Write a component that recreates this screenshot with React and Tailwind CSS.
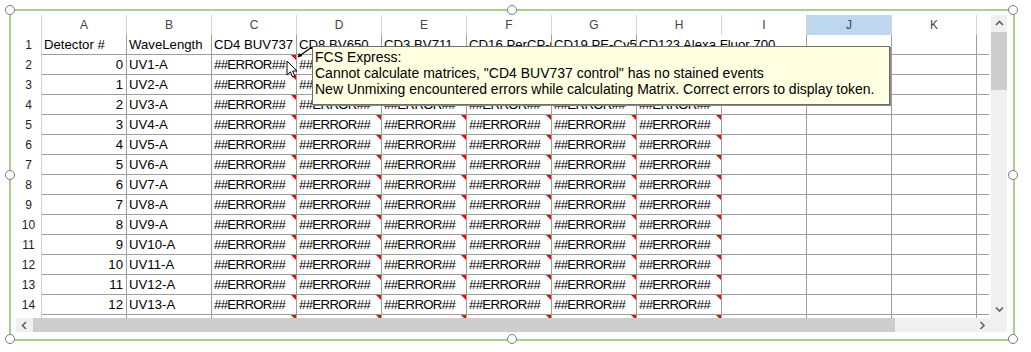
import React from 'react';

const COLS = ['A','B','C','D','E','F','G','H','I','J','K','L'];
const ROW1 = ['Detector #','WaveLength','CD4 BUV737','CD8 BV650','CD3 BV711','CD16 PerCP-Cy5.5','CD19 PE-Cy5','CD123 Alexa Fluor 700','','','',''];

function Tri() {
  return <span className="absolute top-0 right-0 w-[5px] h-[5px] bg-[#ff0000] [clip-path:polygon(0_0,100%_0,100%_100%)]" />;
}

function Handle({ x, y }) {
  return (
    <div
      className="absolute w-[10px] h-[10px] rounded-full border-[1.5px] border-[#7a7a7a] bg-white"
      style={{ left: x - 5, top: y - 5 }}
    />
  );
}

function Chevron({ dir }) {
  const d = {
    up: 'M1 5 L4.5 1.5 L8 5',
    down: 'M1 1.5 L4.5 5 L8 1.5',
  }[dir];
  if (dir === 'left' || dir === 'right') {
    const p = dir === 'left' ? 'M5 1 L1.5 4.5 L5 8' : 'M1.5 1 L5 4.5 L1.5 8';
    return (
      <svg width="7" height="9" viewBox="0 0 7 9">
        <path d={p} fill="none" stroke="#606060" strokeWidth="1.6" />
      </svg>
    );
  }
  return (
    <svg width="9" height="7" viewBox="0 0 9 7">
      <path d={d} fill="none" stroke="#606060" strokeWidth="1.6" />
    </svg>
  );
}

function Row({ n }) {
  const cells = n === 1
    ? ROW1
    : [String(n - 2), `UV${n - 1}-A`, '##ERROR##','##ERROR##','##ERROR##','##ERROR##','##ERROR##','##ERROR##','','','',''];
  return (
    <div className="flex h-[20px]">
      <div className="w-[26px] shrink-0 h-[20px] border-r border-[#d4d4d4] flex items-center justify-center text-[12px] text-[#222]">
        {n}
      </div>
      {cells.map((c, i) => {
        const isNum = n > 1 && i === 0;
        const overflow = n === 1 && i === 7;
        const isErr = c === '##ERROR##';
        return (
          <div
            key={i}
            className={
              'relative w-[85px] shrink-0 h-[20px] border-b border-r border-[#9e9e9e] flex items-end pb-[1px] whitespace-nowrap ' +
              (overflow ? 'overflow-visible border-r-transparent ' : 'overflow-hidden ') +
              (isNum ? 'justify-end pr-[3px]' : 'pl-[2px]')
            }
          >
            <span className={'leading-[17px] ' + (isErr ? 'tracking-[-0.65px]' : '')}>{c}</span>
            {n > 1 && i >= 2 && i <= 7 && <Tri />}
          </div>
        );
      })}
    </div>
  );
}

export default function App() {
  const rows = Array.from({ length: 15 }, (_, i) => i + 1);
  return (
    <div className="relative w-[1031px] h-[352px] bg-white overflow-hidden pt-[9px] pl-[9px] font-['Liberation_Sans',Arial,sans-serif] text-[13.2px] text-black">
      <div className="w-[1006px] h-[332px] border-2 border-[#a9d08e] pl-[5px] pt-[4px]">
        <div className="flex flex-col w-[991px]">
          <div className="flex h-[303px]">
            <div className="w-[973px] h-[303px] overflow-hidden">
              <div className="flex h-[20px]">
                <div className="w-[26px] shrink-0 h-[20px] border-r border-[#d4d4d4]" />
                {COLS.map((c) => (
                  <div
                    key={c}
                    className={
                      'w-[85px] shrink-0 h-[20px] border-r border-[#d4d4d4] flex items-center justify-center text-[12px] text-[#444] ' +
                      (c === 'J' ? 'bg-[#bdd7ee]' : '')
                    }
                  >
                    {c}
                  </div>
                ))}
              </div>
              {rows.map((n) => (
                <Row key={n} n={n} />
              ))}
            </div>
            <div className="w-[2px]" />
            <div className="w-[16px] h-[303px] bg-[#f0f0f0] flex flex-col items-stretch">
              <div className="h-[17px] flex items-center justify-center">
                <Chevron dir="up" />
              </div>
              <div className="h-[58px] bg-[#cdcdcd]" />
              <div className="flex-1" />
              <div className="h-[18px] flex items-center justify-center">
                <Chevron dir="down" />
              </div>
            </div>
          </div>
          <div className="flex h-[14px] bg-[#f0f0f0]">
            <div className="w-[17px] flex items-center justify-center">
              <Chevron dir="left" />
            </div>
            <div className="w-[862px] bg-[#cdcdcd]" />
            <div className="flex-1" />
            <div className="w-[18px] flex items-center justify-center">
              <Chevron dir="right" />
            </div>
            <div className="w-[16px]" />
          </div>
        </div>
      </div>

      {/* tooltip */}
      <div className="absolute left-[312px] top-[46px] w-[578px] h-[59px] bg-[#ffffe1] border border-[#6e6e6e] shadow-[1px_1px_0_#8a8a8a] pl-[2px] pt-[2px] leading-[16px] text-[14px] text-black whitespace-nowrap">
        <div>FCS Express:</div>
        <div>Cannot calculate matrices, "CD4 BUV737 control" has no stained events</div>
        <div>New Unmixing encountered errors while calculating Matrix. Correct errors to display token.</div>
      </div>

      {/* tooltip pointer arrow */}
      <svg className="absolute left-[294px] top-[44px]" width="20" height="16" viewBox="0 0 20 16">
        <path d="M18 3 L6 11.5" stroke="#000" strokeWidth="1.2" />
        <path d="M3.5 13.5 L5 9 L8.5 12 Z" fill="#000" />
      </svg>

      {/* mouse cursor */}
      <svg className="absolute left-[286px] top-[60px]" width="13" height="19" viewBox="0 0 13 19">
        <path d="M1 1 L1 15 L4.3 11.8 L6.6 17 L8.8 16 L6.5 11 L11 11 Z" fill="#fff" stroke="#000" strokeWidth="1" strokeLinejoin="miter" />
      </svg>

      <Handle x={10} y={10} />
      <Handle x={512} y={10} />
      <Handle x={1013} y={10} />
      <Handle x={10} y={175} />
      <Handle x={1013} y={175} />
      <Handle x={10} y={339} />
      <Handle x={512} y={339} />
      <Handle x={1013} y={339} />
    </div>
  );
}
